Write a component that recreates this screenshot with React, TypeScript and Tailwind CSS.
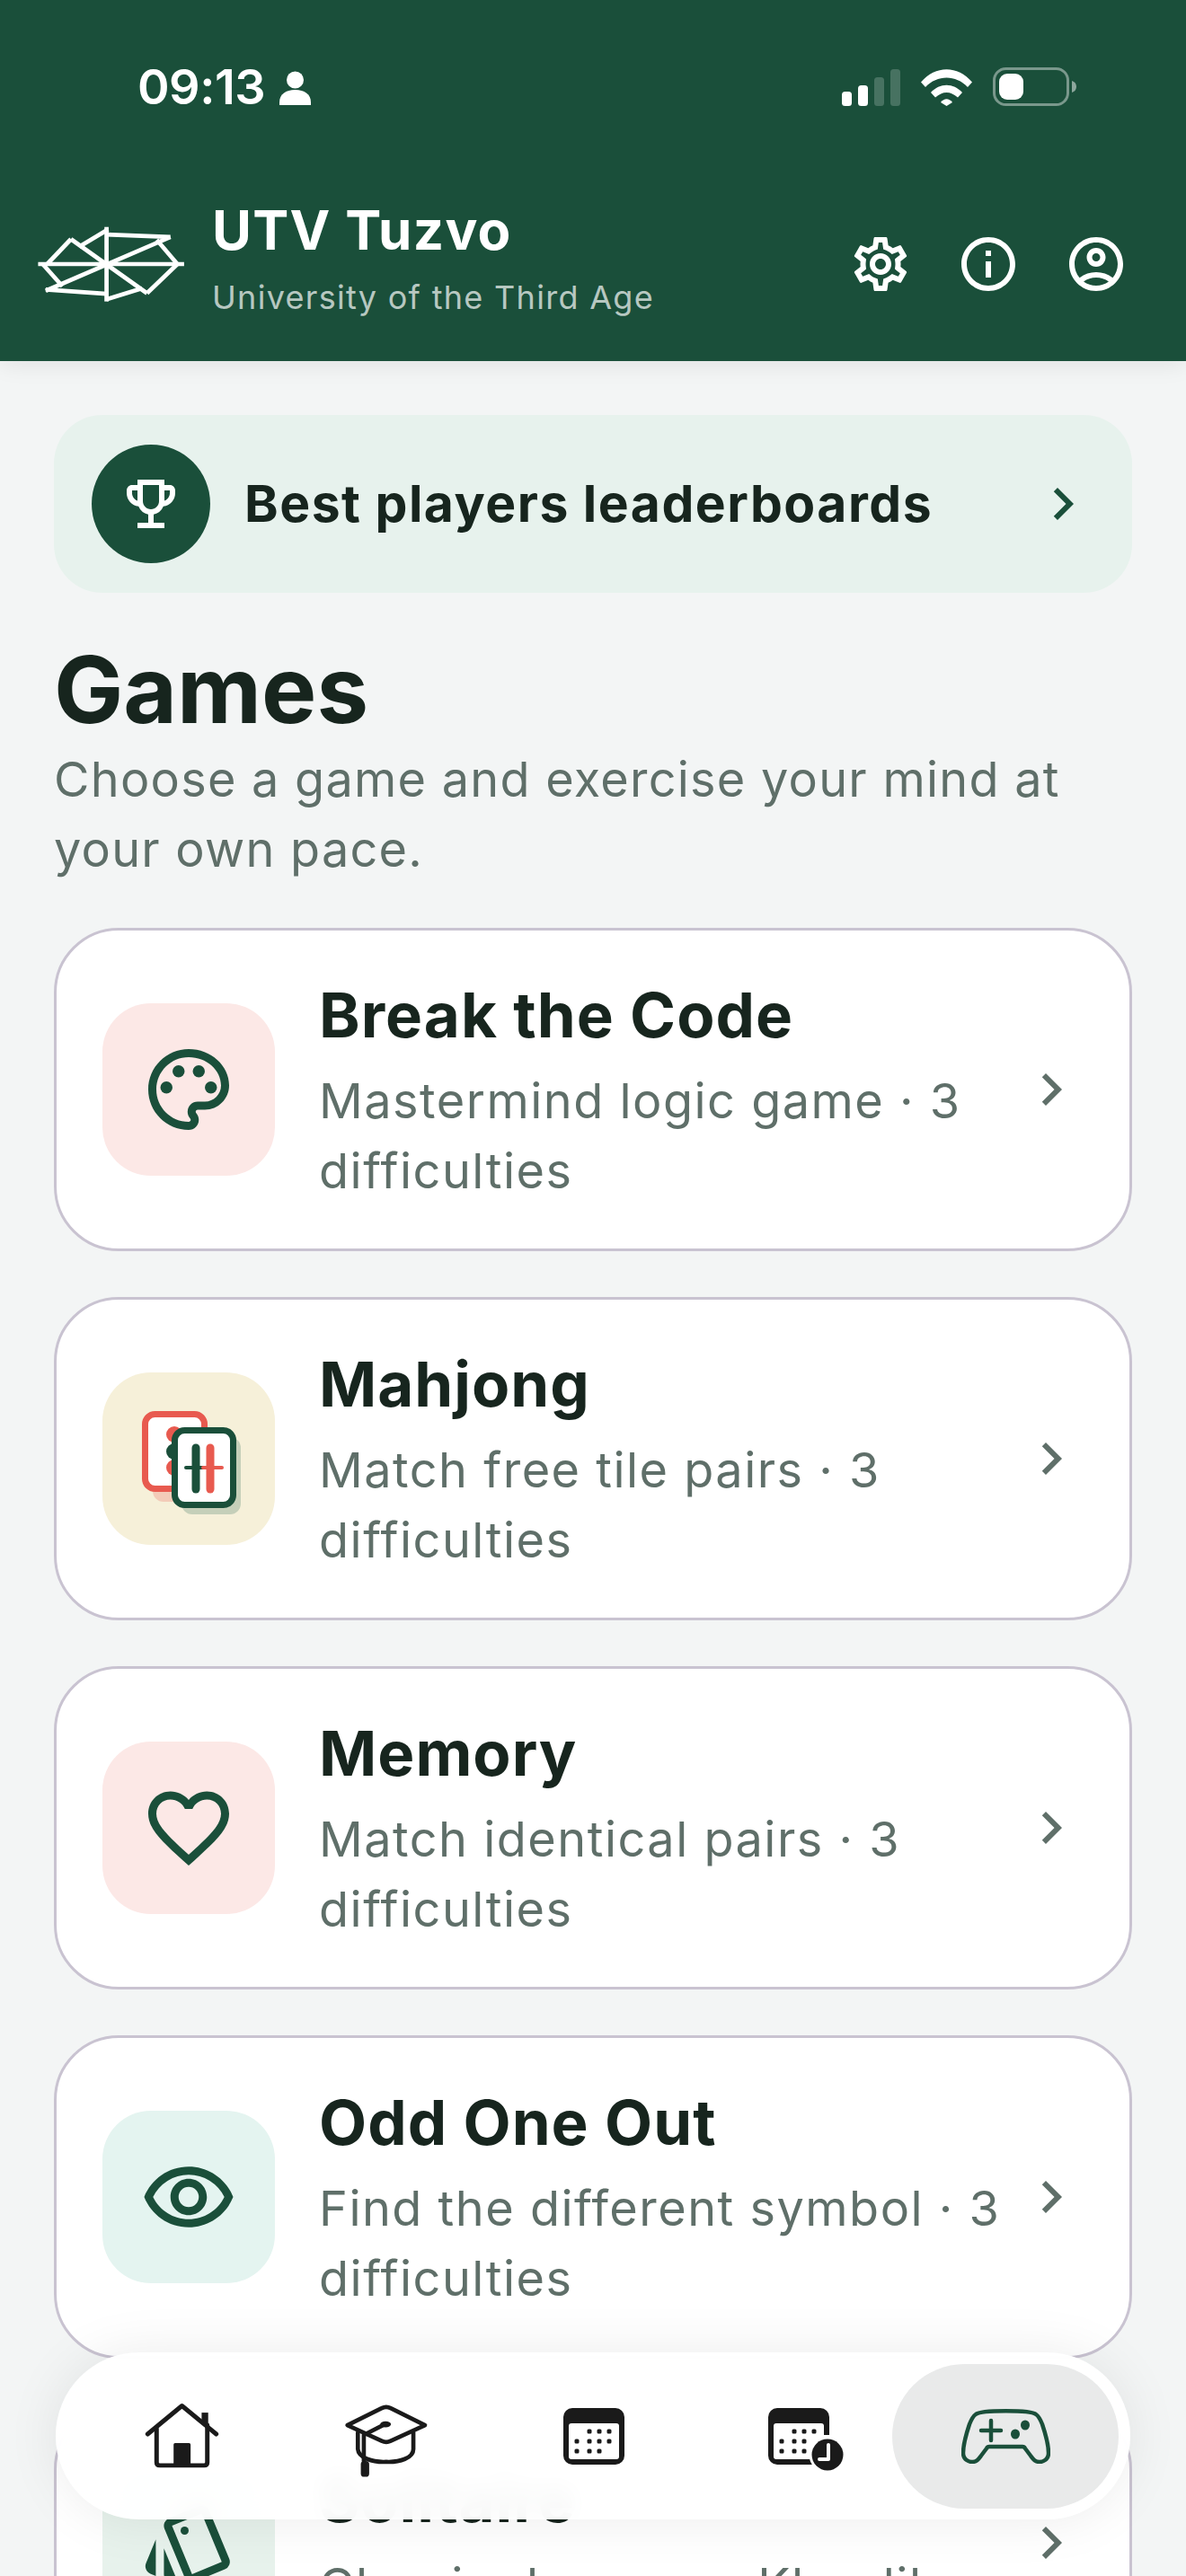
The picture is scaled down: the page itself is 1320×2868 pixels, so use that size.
import type { ReactNode } from 'react';
import {
  MdChevronRight,
  MdFavoriteBorder,
  MdInfoOutline,
  MdOutlineAccountCircle,
  MdOutlineEmojiEvents,
  MdOutlinePalette,
  MdOutlineRemoveRedEye,
  MdOutlineSettings,
  MdOutlineStyle,
} from 'react-icons/md';

const InkDots = ({ dots }: { dots: [number, number][] }) => (
  <>
    {dots.map(([x, y]) => (
      <rect key={`${x}-${y}`} x={x - 2.5} y={y - 2.5} width="5" height="5" rx="1.5" fill="#1a1a1a" />
    ))}
  </>
);

function StatusBar() {
  return (
    <div className="flex h-[118px] items-end justify-between pl-[153px] pr-[122px]">
      <div className="mb-[-6px] flex items-end gap-[15px]">
        <span className="text-[54px] font-semibold leading-[54px] tracking-[-0.5px] text-white">09:13</span>
        <svg width="37" height="38" viewBox="0 0 37 38" className="mb-[7px]">
          <circle cx="18.5" cy="10" r="9.5" fill="white" />
          <path d="M1 38v-3c0-9 7-14 17.500-14S36 26 36 35v3z" fill="white" />
        </svg>
      </div>
      <div className="flex items-end">
        <svg width="65" height="41" viewBox="0 0 65 41" fill="white">
          <rect x="0" y="25" width="11" height="16" rx="3.500" />
          <rect x="18" y="18" width="11" height="23" rx="3.500" />
          <rect x="36" y="9" width="11" height="32" rx="3.500" opacity="0.2" />
          <rect x="54" y="0" width="11" height="41" rx="3.500" opacity="0.2" />
        </svg>
        <svg width="57" height="41" viewBox="0 0 57 41" fill="white" className="ml-[23px]">
          <path d="M0 14.500C16-4.500 41-4.500 57 14.500l-5 5.500C39 6 18 6 5 20z" />
          <path d="M11 26C21 15 36 15 46 26l-5 5.500C33 24 24 24 16 31.500z" />
          <path d="M22 37c4-5 9-5 13 0l-6.500 4z" />
        </svg>
        <svg width="93" height="43" viewBox="0 0 93 43" className="ml-[23px]">
          <rect x="1.500" y="1.500" width="82" height="40" rx="13" fill="none" stroke="white" strokeOpacity="0.42" strokeWidth="3" />
          <rect x="7" y="7" width="27" height="29" rx="9" fill="white" />
          <path d="M88 15c3 1 5 3 5 6.500S91 27 88 28z" fill="white" fillOpacity="0.5" />
        </svg>
      </div>
    </div>
  );
}

function Logo() {
  return (
    <svg width="168" height="88" viewBox="64 92 494 260" stroke="white" strokeWidth="14" fill="none">
      <path d="M70 222H550" />
      <path d="M295 100V345" />
      <path d="M95 310L505 133" />
      <path d="M178 140L428 318" />
      <path d="M100 222L178 140" />
      <path d="M205 165L300 108" />
      <path d="M295 125L505 133" />
      <path d="M460 142L528 222L428 318" />
      <path d="M295 338L412 302" />
      <path d="M95 306L295 320" />
      <path d="M150 295L85 222" />
    </svg>
  );
}

function Header() {
  return (
    <header className="relative z-10 h-[402px] bg-[#1a4f3a] shadow-[0_4px_24px_rgba(0,0,0,0.08)]">
      <StatusBar />
      <div className="mt-[102px] flex items-center pl-[40px] pr-[64px]">
        <Logo />
        <div className="mb-[15px] ml-[28px] flex-1">
          <div className="text-[60px] font-bold leading-[72px] tracking-[1.3px] text-white">UTV Tuzvo</div>
          <div className="mt-[17px] text-[36px] leading-[44px] tracking-[1.3px] text-white/70">University of the Third Age</div>
        </div>
        <div className="flex gap-[48px] text-white">
          <MdOutlineSettings size={72} />
          <MdInfoOutline size={72} />
          <MdOutlineAccountCircle size={72} />
        </div>
      </div>
    </header>
  );
}

function MahjongIcon() {
  return (
    <svg width="192" height="192" viewBox="0 0 192 192">
      <rect x="56" y="60" width="66" height="84" rx="12" fill="#f3cbb8" />
      <rect x="47.500" y="46.500" width="66" height="83" rx="11" fill="white" stroke="#e85a4f" strokeWidth="7" />
      <circle cx="80" cy="69" r="9" fill="#e85a4f" />
      <circle cx="80" cy="106" r="9" fill="#e85a4f" />
      <circle cx="80" cy="88" r="9" fill="#1a4f3a" />
      <rect x="88" y="72" width="66" height="86" rx="12" fill="#c5cfb9" />
      <rect x="80.500" y="64.500" width="65" height="83" rx="11" fill="white" stroke="#1a4f3a" strokeWidth="7" />
      <path d="M93 106H112" stroke="#1a4f3a" strokeWidth="4" strokeLinecap="round" />
      <path d="M112 106H133" stroke="#e85a4f" strokeWidth="4" strokeLinecap="round" />
      <path d="M104 84V130" stroke="#1a4f3a" strokeWidth="9" strokeLinecap="round" />
      <path d="M120 84V130" stroke="#e85a4f" strokeWidth="9" strokeLinecap="round" />
    </svg>
  );
}

type Game = { title: string; desc: string; box: string; icon: ReactNode; card?: string; text?: string };

const games: Game[] = [
  { title: 'Break the Code', desc: 'Mastermind logic game · 3 difficulties', box: 'bg-[#fce8e6]', icon: <MdOutlinePalette size={108} color="#1a4f3a" /> },
  { title: 'Mahjong', desc: 'Match free tile pairs · 3 difficulties', box: 'bg-[#f6f0d9]', icon: <MahjongIcon /> },
  { title: 'Memory', desc: 'Match identical pairs · 3 difficulties', box: 'bg-[#fce8e6]', icon: <MdFavoriteBorder size={108} color="#1a4f3a" /> },
  { title: 'Odd One Out', desc: 'Find the different symbol · 3 difficulties', box: 'bg-[#e4f4f0]', icon: <MdOutlineRemoveRedEye size={108} color="#1a4f3a" /> },
  {
    title: 'Solitaire',
    desc: 'Classic draw-one Klondike · 3 difficulties',
    box: 'bg-[#e7f2ec]',
    icon: <MdOutlineStyle size={108} color="#1a4f3a" />,
    card: 'h-[308px]',
    text: 'mt-[70px]',
  },
];

function GameCard({ game }: { game: Game }) {
  return (
    <div className={`flex shrink-0 items-center rounded-[72px] border-[3px] border-[#c9c3d1] bg-white pl-[51px] pr-[51px] ${game.card ?? 'h-[360px]'}`}>
      <div className={`flex h-[192px] w-[192px] shrink-0 items-center justify-center rounded-[54px] ${game.box}`}>{game.icon}</div>
      <div className={`ml-[49px] min-w-0 flex-1 pt-[8px] ${game.text ?? ''}`}>
        <div className="text-[69px] font-bold leading-[78px] tracking-[1px] text-[#17251e]">{game.title}</div>
        <div className="mt-[18px] text-[54px] leading-[78px] tracking-[1.5px] text-[#5f6f69]">{game.desc}</div>
      </div>
      <MdChevronRight size={72} color="#5f6f69" className="shrink-0" />
    </div>
  );
}

function HomeIcon() {
  return (
    <svg width="83" height="74" viewBox="90 45 250 222" fill="none" stroke="#1a1a1a" strokeWidth="15" strokeLinecap="round" strokeLinejoin="round">
      <path d="M100 150L215 55L330 150" />
      <path d="M130 132V245Q130 255 140 255H290Q300 255 300 245V120" />
      <path d="M292 115V78" strokeWidth="22" strokeLinecap="butt" />
      <rect x="187" y="180" width="57" height="72" rx="5" fill="#1a1a1a" stroke="none" />
    </svg>
  );
}

function CapIcon() {
  return (
    <svg width="98" height="85" viewBox="755 50 295 255" fill="none" stroke="#1a1a1a" strokeWidth="14" strokeLinecap="round" strokeLinejoin="round">
      <path d="M775 125L890 68Q905 60 920 68L1035 125L920 178Q905 185 890 178Z" />
      <path d="M810 150V205C812 235 860 250 905 248C950 250 996 235 996 205V150" />
      <path d="M900 122L830 158V245" />
      <ellipse cx="903" cy="122" rx="18" ry="10" fill="#1a1a1a" stroke="none" />
      <rect x="820" y="245" width="28" height="53" rx="11" fill="#1a1a1a" stroke="none" />
    </svg>
  );
}

function CalendarIcon() {
  return (
    <svg width="68" height="63" viewBox="0 0 68 63">
      <rect width="68" height="63" rx="10" fill="#1a1a1a" />
      <rect x="6" y="17" width="56" height="40" rx="3" fill="white" />
      <InkDots dots={[[29, 26], [40, 26], [51, 26], [15, 37], [29, 37], [40, 37], [51, 37], [15, 48], [29, 48], [40, 48]]} />
    </svg>
  );
}

function CalendarClockIcon() {
  return (
    <svg width="84" height="71" viewBox="0 0 84 71">
      <rect width="68" height="63" rx="10" fill="#1a1a1a" />
      <rect x="6" y="17" width="56" height="40" rx="3" fill="white" />
      <InkDots dots={[[29, 26], [40, 26], [51, 26], [15, 37], [29, 37], [40, 37], [15, 48], [29, 48], [40, 48]]} />
      <rect x="62" y="30" width="6" height="22" fill="white" />
      <circle cx="66" cy="52" r="20.500" fill="white" />
      <circle cx="66" cy="52" r="17.500" fill="#1a1a1a" />
      <path d="M67 41V57H57" fill="none" stroke="white" strokeWidth="4" strokeLinecap="round" strokeLinejoin="round" />
    </svg>
  );
}

function GamepadIcon() {
  return (
    <svg width="99" height="62" viewBox="0 0 99 62" fill="none" stroke="#1a4f3a" strokeWidth="4.500" strokeLinecap="round" strokeLinejoin="round">
      <path d="M16 7C22 2 77 2 83 7C86 9 88 13 90 18C94 30 97 40 97 50C97 58 90 60 87 60C82 60 80 57 77 53L71 45Q70 43 68 43L31 43Q29 43 28 45L22 53C19 57 17 60 12 60C9 60 2 58 2 50C2 40 5 30 9 18C11 13 13 9 16 7Z" />
      <path d="M22 25H44M33 14V36" />
      <ellipse cx="71" cy="19" rx="5" ry="5.500" fill="#1a4f3a" stroke="none" />
      <ellipse cx="60" cy="29" rx="5" ry="5.500" fill="#1a4f3a" stroke="none" />
    </svg>
  );
}

function BottomNav() {
  return (
    <nav className="absolute bottom-[63px] left-[62px] z-20 grid h-[186px] w-[1196px] grid-cols-[229px_229px_229px_218px_252px] items-center rounded-full bg-[rgba(255,255,255,0.96)] pl-[26px] shadow-[0_0_60px_rgba(0,0,0,0.08)] backdrop-blur-md">
      <div className="flex justify-center"><HomeIcon /></div>
      <div className="mt-[10px] flex justify-center pr-[6px]"><CapIcon /></div>
      <div className="flex justify-center"><CalendarIcon /></div>
      <div className="mt-[8px] flex justify-center pl-[25px]"><CalendarClockIcon /></div>
      <div className="flex h-[161px] items-center justify-center rounded-full bg-[#e9eaea]"><GamepadIcon /></div>
    </nav>
  );
}

export default function App() {
  return (
    <div className="relative h-[2868px] w-[1320px] overflow-hidden bg-[#f3f5f5] [font-family:Inter,sans-serif]">
      <Header />
      <main className="flex flex-col px-[60px] pt-[60px]">
        {/* Leaderboard link */}
        <div className="flex h-[198px] items-center rounded-[54px] bg-[#e7f2ed] pl-[42px] pr-[41px]">
          <div className="flex h-[132px] w-[132px] items-center justify-center rounded-full bg-[#1a4f3a]">
            <MdOutlineEmojiEvents size={72} color="white" />
          </div>
          <div className="ml-[38px] flex-1 text-[57px] font-bold tracking-[1.500px] text-[#17251e]">Best players leaderboards</div>
          <MdChevronRight size={72} color="#1a4f3a" />
        </div>

        <h1 className="mt-[49px] text-[103px] font-bold leading-[118px] text-[#17251e]">Games</h1>
        <p className="mb-[48px] pt-[2px] text-[54px] leading-[78px] tracking-[1.25px] text-[#5f6f69]">
          Choose a game and exercise your mind at your own pace.
        </p>

        <div className="flex flex-col gap-[51px]">
          {games.map(g => <GameCard key={g.title} game={g} />)}
        </div>
      </main>
      <BottomNav />
    </div>
  );
}
